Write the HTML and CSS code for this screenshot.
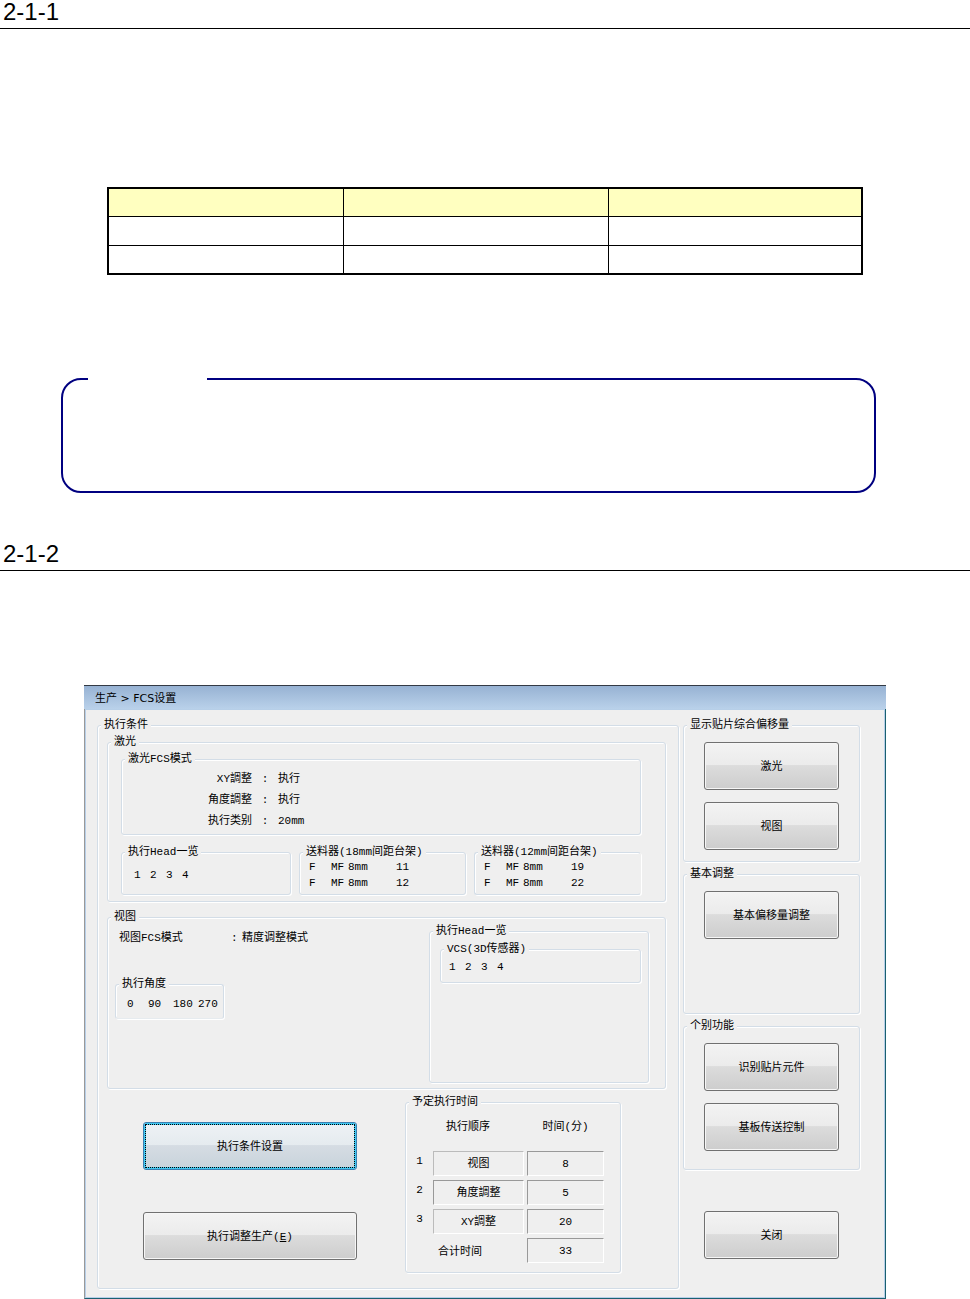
FILE: index.html
```html
<!DOCTYPE html>
<html lang="zh-CN">
<head>
    <meta charset="UTF-8">
    <meta name="viewport" content="width=device-width, initial-scale=1.0">
    <title>FCS设置</title>
    <link rel="stylesheet" href="styles.css">
</head>
<body>
    <h2 class="section-title">2-1-1</h2>

    <table class="spec-table">
        <colgroup>
            <col class="spec-a">
            <col class="spec-b">
            <col>
        </colgroup>
        <thead>
            <tr><th></th><th></th><th></th></tr>
        </thead>
        <tbody>
            <tr><td></td><td></td><td></td></tr>
            <tr><td></td><td></td><td></td></tr>
        </tbody>
    </table>

    <div class="note"></div>

    <h2 class="section-title">2-1-2</h2>

    <main class="window">
        <div class="title-bar">生产 &gt; FCS设置</div>
        <div class="window-body">

            <!-- Left side: conditions -->
            <fieldset class="group conditions">
                <legend>执行条件</legend>

                <fieldset class="group laser">
                    <legend>激光</legend>
                    <fieldset class="group laser-mode">
                        <legend>激光FCS模式</legend>
                        <dl class="settings">
                            <dt>XY調整</dt><dd class="colon">:</dd><dd>执行</dd>
                            <dt>角度調整</dt><dd class="colon">:</dd><dd>执行</dd>
                            <dt>执行类别</dt><dd class="colon">:</dd><dd>20mm</dd>
                        </dl>
                    </fieldset>
                    <div class="trio">
                        <fieldset class="group">
                            <legend>执行Head一览</legend>
                            <div class="heads heads-laser"><span>1</span><span>2</span><span>3</span><span>4</span></div>
                        </fieldset>
                        <fieldset class="group">
                            <legend>送料器(18mm间距台架)</legend>
                            <table class="feeders">
                                <tr><td>F</td><td>MF</td><td>8mm</td><td>11</td></tr>
                                <tr><td>F</td><td>MF</td><td>8mm</td><td>12</td></tr>
                            </table>
                        </fieldset>
                        <fieldset class="group open-right">
                            <legend>送料器(12mm间距台架)</legend>
                            <table class="feeders">
                                <tr><td>F</td><td>MF</td><td>8mm</td><td>19</td></tr>
                                <tr><td>F</td><td>MF</td><td>8mm</td><td>22</td></tr>
                            </table>
                        </fieldset>
                    </div>
                </fieldset>

                <fieldset class="group vision">
                    <legend>视图</legend>
                    <div class="vision-grid">
                        <div class="vision-left">
                            <div class="mode-row">
                                <span class="mode-label">视图FCS模式</span>
                                <span class="mode-colon">:</span>
                                <span>精度调整模式</span>
                            </div>
                            <fieldset class="group angles">
                                <legend>执行角度</legend>
                                <div class="angle-list"><span>0</span><span>90</span><span>180</span><span>270</span></div>
                            </fieldset>
                        </div>
                        <fieldset class="group vision-heads">
                            <legend>执行Head一览</legend>
                            <fieldset class="group vcs">
                                <legend>VCS(3D传感器)</legend>
                                <div class="heads"><span>1</span><span>2</span><span>3</span><span>4</span></div>
                            </fieldset>
                        </fieldset>
                    </div>
                </fieldset>

                <div class="bottom-row">
                    <div class="main-buttons">
                        <button type="button" class="btn btn-focused">执行条件设置</button>
                        <button type="button" class="btn" accesskey="e">执行调整生产(<u>E</u>)</button>
                    </div>
                    <fieldset class="group schedule">
                        <legend>予定执行时间</legend>
                        <table class="times">
                            <thead>
                                <tr><th class="num"></th><th class="order">执行顺序</th><th class="minutes">时间(分)</th></tr>
                            </thead>
                            <tbody>
                                <tr><td class="num">1</td><td class="sunken light">视图</td><td class="sunken">8</td></tr>
                                <tr><td class="num">2</td><td class="sunken">角度調整</td><td class="sunken">5</td></tr>
                                <tr><td class="num">3</td><td class="sunken light">XY調整</td><td class="sunken">20</td></tr>
                                <tr><td class="num"></td><td class="total">合计时间</td><td class="sunken">33</td></tr>
                            </tbody>
                        </table>
                    </fieldset>
                </div>
            </fieldset>

            <!-- Right side: actions -->
            <div class="actions">
                <fieldset class="group offsets">
                    <legend>显示贴片综合偏移量</legend>
                    <button type="button" class="btn">激光</button>
                    <button type="button" class="btn">视图</button>
                </fieldset>
                <fieldset class="group basic">
                    <legend>基本调整</legend>
                    <button type="button" class="btn">基本偏移量调整</button>
                </fieldset>
                <fieldset class="group functions">
                    <legend>个别功能</legend>
                    <button type="button" class="btn">识别贴片元件</button>
                    <button type="button" class="btn">基板传送控制</button>
                </fieldset>
                <button type="button" class="btn btn-close">关闭</button>
            </div>

        </div>
    </main>
</body>
</html>
```
FILE: styles.css
```css
* {
    box-sizing: border-box;
}

body {
    margin: 0;
    background-color: #fff;
    color: #000;
    font-family: "Liberation Sans", Arial, sans-serif;
}

/* Numbered headings with a full width rule */
.section-title {
    margin: 0;
    padding: 0 3px 4px;
    border-bottom: 1px solid #000;
    font-size: 24px;
    font-weight: 400;
    line-height: 24px;
}

/* Table with the yellow header */
.spec-table {
    width: 78%;
    margin: 158px auto 0;
    border: 2px solid #000;
    border-collapse: collapse;
    table-layout: fixed;
}

.spec-a { width: 236px; }
.spec-b { width: 265px; }

.spec-table th,
.spec-table td {
    height: 29px;
    padding: 0;
    border: 1px solid #000;
}

.spec-table th {
    height: 28px;
    background-color: #ffffc0;
}

/* Rounded note frame, open at the top left */
.note {
    position: relative;
    height: 115px;
    margin: 103px 94px 49px 61px;
    border: 2px solid #000080;
    border-radius: 20px;
}

.note::before {
    content: "";
    position: absolute;
    top: -2px;
    left: 25px;
    width: 119px;
    height: 2px;
    background-color: #fff;
}

/* Application window */
.window {
    margin: 114px 84px 0;
    font-family: "Liberation Mono", "Noto Sans CJK SC", monospace;
    font-size: 11px;
    line-height: 16px;
}

.title-bar {
    height: 24px;
    padding: 5px 11px 0;
    border-top: 1px solid #333a44;
    background: linear-gradient(#97b2d3, #b9d1ea);
    font-family: "DejaVu Sans", "Noto Sans CJK SC", sans-serif;
}

.window-body {
    display: grid;
    grid-template-columns: 1fr 177px;
    gap: 4px;
    padding: 9px 25px 9px 12px;
    border: 1px solid #1a6070;
    border-top: none;
    border-left-color: #999;
    background-color: #efefef;
    box-shadow: inset 0 0 0 1px #b7cfe8;
}

/* Group boxes, --inset is the left padding that the legend steps over */
.group {
    --inset: 0px;
    min-width: 0;
    margin: 0;
    padding: 0 0 0 var(--inset);
    border: 1px solid #d3dde7;
    border-radius: 3px;
    box-shadow: 1px 1px 0 #fff, inset 1px 1px 0 #fff;
}

.group > legend {
    height: 14px;
    margin-left: calc(3px - var(--inset));
    padding: 0 3px;
    background-color: #efefef;
    line-height: 14px;
}

.conditions {
    --inset: 9px;
    padding: 3px 12px 15px var(--inset);
}

.laser {
    --inset: 13px;
    padding: 3px 24px 6px var(--inset);
}

.laser-mode {
    padding: 3px 0 2px;
}

.settings {
    display: grid;
    grid-template-columns: 130px 26px 1fr;
    margin: 0;
    line-height: 21px;
}

.settings dt {
    text-align: right;
}

.settings dd {
    margin: 0;
}

.settings .colon {
    text-align: center;
}

.trio {
    display: grid;
    grid-template-columns: 170fr 167fr 167fr;
    gap: 8px;
    margin-top: 10px;
}

.trio .group {
    padding-bottom: 3px;
}

.trio .open-right {
    border-right-color: transparent;
}

.heads {
    display: flex;
    padding: 3px 8px 7px;
}

.heads span {
    width: 16px;
}

.heads-laser {
    padding: 8px 12px;
}

.feeders {
    margin-left: 9px;
    border-collapse: collapse;
}

.feeders td {
    width: 22px;
    padding: 0;
}

.feeders td:nth-child(2) {
    width: 17px;
}

.feeders td:nth-child(3) {
    width: 48px;
}

/* Vision group */
.vision {
    --inset: 7px;
    margin-top: 8px;
    padding: 0 16px 5px var(--inset);
}

.vision-grid {
    display: grid;
    grid-template-columns: 1fr 220px;
}

.mode-row {
    display: flex;
    padding: 6px 4px;
}

.mode-label {
    width: 112px;
}

.mode-colon {
    width: 11px;
}

.angles {
    width: 109px;
    margin-top: 25px;
    border-bottom-color: #e6ebef;
}

.angle-list {
    display: grid;
    grid-template-columns: 21px 25px 25px 25px;
    padding: 5px 0 6px 11px;
}

.vision-heads {
    --inset: 10px;
    min-height: 159px;
    padding: 4px 7px 0 var(--inset);
}

/* Buttons and schedule */
.bottom-row {
    display: flex;
    justify-content: space-between;
    margin-top: 6px;
    padding: 0 45px 0 36px;
}

.main-buttons {
    display: flex;
    flex-direction: column;
    gap: 42px;
    width: 214px;
    padding-top: 27px;
}

.btn {
    display: block;
    width: 135px;
    height: 48px;
    padding: 2px 0 0;
    border: 1px solid #707070;
    border-radius: 3px;
    background: linear-gradient(#f3f3f3, #ebebeb 48%, #dcdcdc 49%, #cdcdcd);
    box-shadow: inset 0 0 0 1px #f6f6f6;
    color: #000;
    font: inherit;
    text-align: center;
}

.main-buttons .btn {
    width: 100%;
}

.btn-focused {
    border-color: #3c7fb1;
    outline: 1px dotted #000;
    outline-offset: -3px;
    background: linear-gradient(#eef2f5, #e5ebef 48%, #d5dce3 49%, #c8d3db);
    box-shadow: inset 0 0 0 1px #42c8f0;
}

/* the focused look needs more weight than the plain button */
.main-buttons .btn-focused {
    box-shadow: inset 0 0 0 2px #42c8f0;
}

.schedule {
    width: 216px;
    padding-bottom: 5px;
}

.times {
    border-spacing: 3px 4px;
    border-collapse: separate;
    table-layout: fixed;
    width: 201px;
}

.times th {
    height: 34px;
    padding: 6px 0 0;
    font-weight: 400;
    vertical-align: top;
}

.times td {
    height: 25px;
    padding: 0;
    text-align: center;
}

.times td.num {
    padding-top: 2px;
}

.times .num {
    width: 21px;
    vertical-align: top;
}

.times .order {
    width: 91px;
    padding-left: 13px;
    text-align: left;
}

.times .sunken {
    border: 1px solid #fff;
    border-top-color: #999;
    border-left-color: #999;
}

.times .light {
    border-top-color: #bbb;
    border-left-color: #bbb;
}

.times .total {
    padding: 2px 0 0 5px;
    text-align: left;
}

/* Right column */
.actions {
    display: flex;
    flex-direction: column;
    gap: 5px;
}

.actions .group {
    --inset: 20px;
    padding: 10px 20px 11px var(--inset);
}

.actions .btn + .btn {
    margin-top: 12px;
}

.actions .basic {
    min-height: 147px;
}

.actions .functions {
    min-height: 151px;
}

.btn-close {
    margin: 36px 0 0 21px;
}
```
